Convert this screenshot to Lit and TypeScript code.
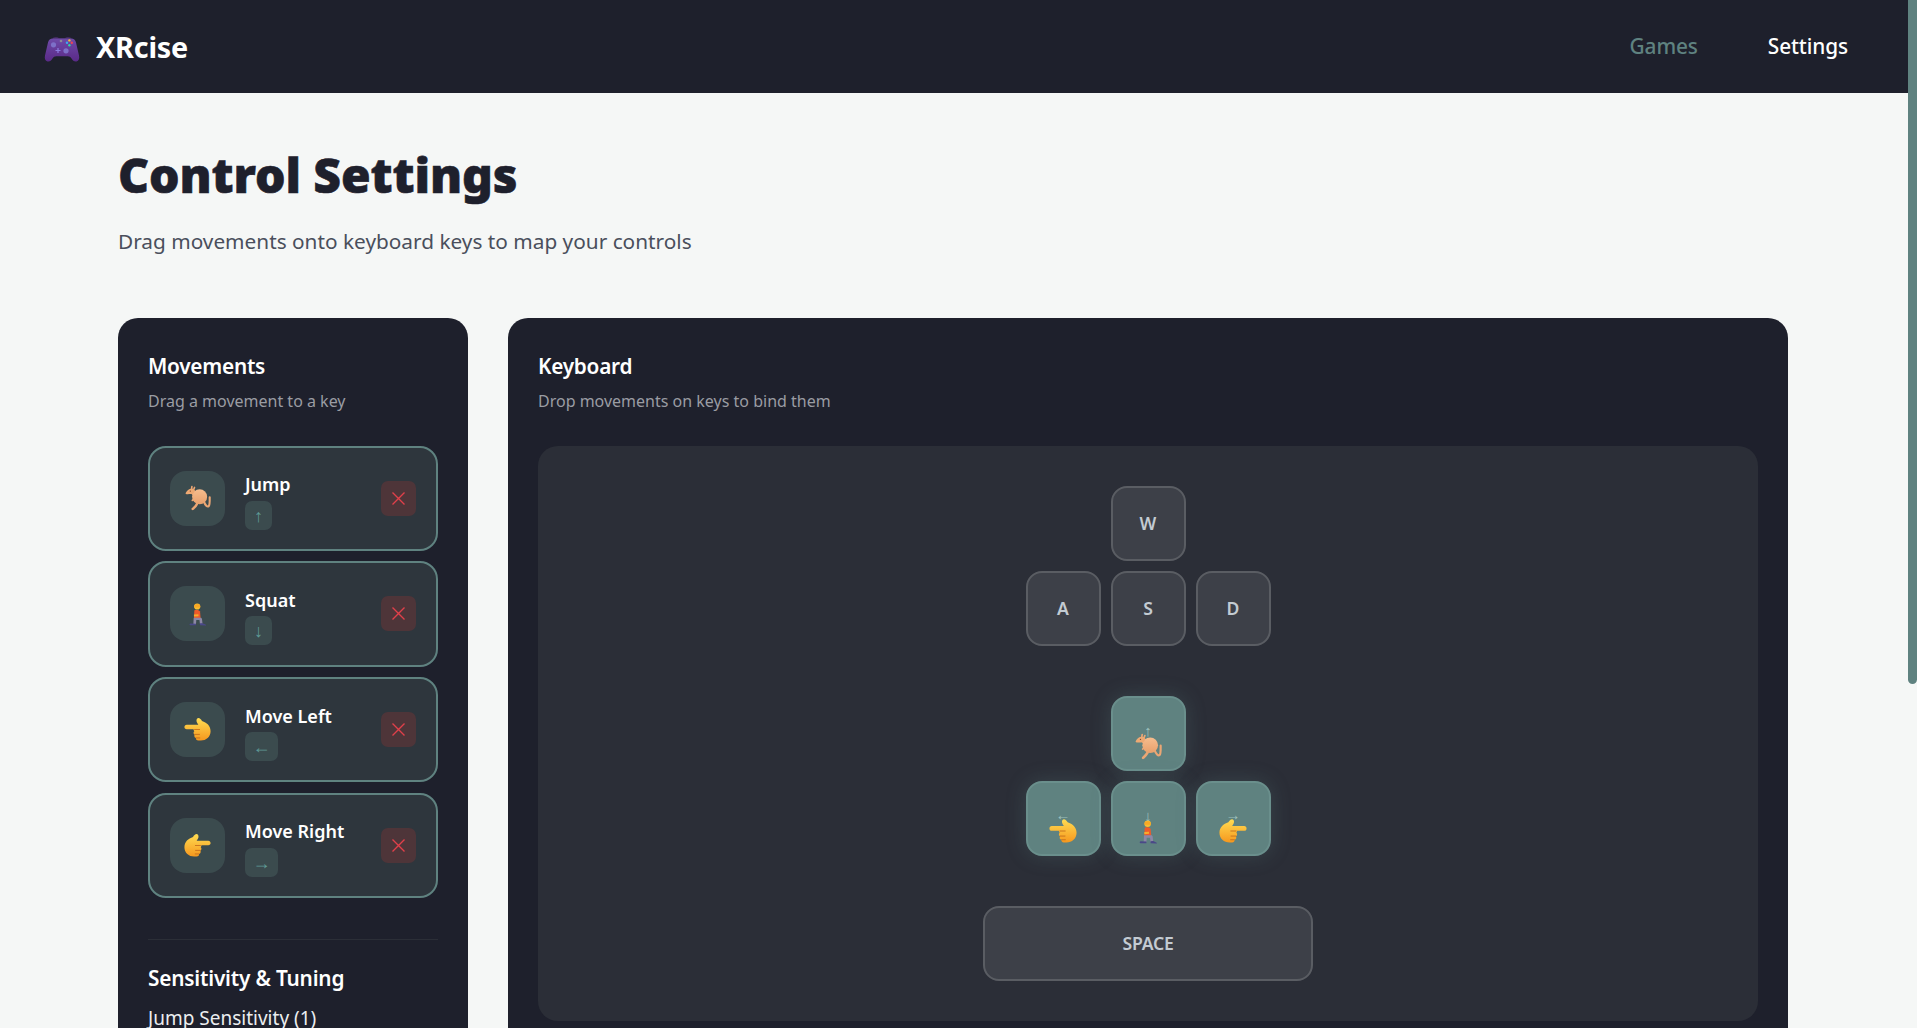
import { LitElement, html, css, svg } from "lit";
import { customElement } from "lit/decorators.js";

const grad = (id: string, a: string, b: string) => svg`<defs><linearGradient id=${id} x1="0" y1="0" x2="0" y2="1"><stop offset="0" stop-color=${a}/><stop offset="1" stop-color=${b}/></linearGradient></defs>`;

const kangaroo = (s: number) => html`<svg class="emo" width=${s} height=${s} viewBox="0 0 32 32">
  ${grad("kg", "#f6bd8e", "#e8a06c")}
  <g stroke="#eba674" fill="none" stroke-linecap="round" stroke-linejoin="round">
    <path stroke-width="2.600" d="M23 20c2 5 4.500 7.500 6.200 6 1.300-1.300 1.300-6 1.200-11"/>
    <path stroke-width="3" d="M15.500 20c.5 4-3 6.500-6 9.500"/>
    <path stroke-width="2" d="M13 15.500l-4 3.500"/>
    <path stroke-width="6" d="M8.500 7.500l5 4.500"/>
    <path stroke-width="2" d="M8 5l.5-3M10.500 6l1.200-3"/>
  </g>
  <circle cx="18" cy="14.500" r="9.300" fill="url(#kg)"/>
  <path fill="#eda973" d="M.8 9.800C2 7 5 4.500 8 4.500c2.500 0 4 2 3.500 4-.4 1.600-2.500 2.700-5 2.700-2 .1-4.200.3-5.300-.2-.5-.2-.6-.7-.4-1.200z"/>
  <circle cx="6.500" cy="7.500" r=".8" fill="#6e3f28"/>
</svg>`;

const hand = (s: number, flip: boolean) => html`<svg class="emo ${flip ? "flip" : ""}" width=${s} height=${s} viewBox="0 0 32 32">
  ${grad(flip ? "hr" : "hl", "#ffdc52", "#f6981e")}
  <path fill="url(#${flip ? "hr" : "hl"})" d="M17 2.500c1.800 0 3.300 1.700 4.300 3.500 5.500 1.700 10.200 5.700 10.200 12 0 6.800-5.300 11-11.500 11h-3c-2 0-3.200-1.500-2.800-3-2-.5-2.500-2.600-1.500-3.800-1.700-.9-1.800-3.100-.5-4.200-.6-.7-.9-1.500-.9-2.300H3.200C1.500 15.700.5 14.500.5 13s1-2.700 2.700-2.700H17c-1-1.600-2.200-3.100-2.200-4.800 0-1.700 1-3 2.200-3z"/>
  <path d="M12.500 16h6M12.800 21.800h5.500M14.500 26h4.200" stroke="#c8701c" stroke-width="1.100" stroke-linecap="round" fill="none"/>
</svg>`;

const kneel = (s: number) => html`<svg class="emo" width=${s} height=${s} viewBox="0 0 32 32">
  <circle cx="15" cy="6.800" r="3.800" fill="#f8bf2f"/>
  <path fill="#f9a825" d="M11.200 6.500c0-3.400 7.600-3.800 7.600 0v1.500h-7.600z"/>
  <path fill="#ef5a2a" d="M11.500 11.500c2.500-1 6.300-.7 7 1.500l.7 8H11z"/>
  <path fill="#f7ad2b" d="M11 16.500l5.500-.3.200 2.600-5.700.4z"/>
  <path fill="#8d87a6" d="M11 20.500h8.200c1 0 1.600.8 1.700 1.500l.7 6-3.200.2-.6-4.700h-3.900l-.4 5-3.200-.2.300-6c0-1 .1-1.800.4-1.800z"/>
  <path fill="#4a4888" d="M6.500 27.600l7 .3v2H6.500c-1.200 0-1.200-2 0-2.300zM18.500 27.500l3.200-.2 4 2c.6.400.3 1.100-.4 1l-6.800-.4z"/>
</svg>`;

const gamepad = html`<svg class="pad" width="36" height="30" viewBox="0 0 36 30">
  <defs><linearGradient id="pg" x1="0" y1="0" x2="0" y2="1"><stop offset="0" stop-color="#6e4aa8"/><stop offset="1" stop-color="#5a2a88"/></linearGradient></defs>
  <path fill="#3f2a5c" d="M9 4c1-1.200 5-1.500 6 .3h6c1-1.800 5-1.500 6-.3l1 2H8z"/>
  <path fill="url(#pg)" d="M9 4.500h18c2.800 0 4.300 1.600 5 4l3 13c.7 3-.3 5.500-2.500 5.900-2.300.4-3.700-1-5-3-1-1.300-2-2.200-3.700-2.200H12.200c-1.700 0-2.700.9-3.700 2.200-1.300 2-2.700 3.400-5 3-2.200-.4-3.200-2.900-2.500-5.900l3-13c.7-2.400 2.200-4 5-4z"/>
  <circle cx="9.500" cy="10.800" r="2.600" fill="#7d70c8"/><circle cx="22" cy="16.800" r="2.600" fill="#7d70c8"/>
  <circle cx="17" cy="7" r="1.300" fill="#8a8a9a"/>
  <path d="M14 14v5M11.500 16.500h5" stroke="#8b7de0" stroke-width="1.200"/>
  <circle cx="25.400" cy="6.400" r="1.200" fill="#f5b83a"/><circle cx="25.400" cy="11.200" r="1.200" fill="#2fd6a0"/>
  <circle cx="23" cy="8.800" r="1.200" fill="#3aa8f0"/><circle cx="27.800" cy="8.800" r="1.200" fill="#ee4454"/>
</svg>`;

const MOVES = [
  { name: "Jump", arrow: "↑", icon: (s: number) => kangaroo(s), narrow: true },
  { name: "Squat", arrow: "↓", icon: (s: number) => kneel(s), narrow: true },
  { name: "Move Left", arrow: "←", icon: (s: number) => hand(s + 1, false), narrow: false },
  { name: "Move Right", arrow: "→", icon: (s: number) => hand(s + 1, true), narrow: false },
];

@customElement("app-root")
export class AppRoot extends LitElement {
  static styles = css`
    :host { display: flex; height: 100vh; overflow: hidden; background: #f5f7f6; color: #fff;
      font-family: "Noto Sans", "Open Sans", sans-serif; }
    * { box-sizing: border-box; }
    .page { flex: 1; min-width: 0; height: 100vh; overflow: hidden; }
    .sb { width: 9px; flex: none; }
    .thumb { height: 684px; background: #5f8280; border-radius: 0 0 5px 5px; }
    header { height: 93px; background: #1e202c; display: flex; align-items: center; justify-content: space-between; padding: 0 60px 0 44px; }
    .logo { display: flex; align-items: center; gap: 16px; font-size: 28.800px; font-weight: 700; letter-spacing: -0.2px; }
    .logo span { padding-bottom: 1px; }
    .pad { display: block; margin-top: 4px; }
    nav { display: flex; gap: 70px; padding-bottom: 2px; font-size: 20.800px; font-weight: 500; letter-spacing: -0.1px; }
    nav .dim { color: #5f8280; }
    main { padding: 50px 120px 48px 118px; }
    h1 { margin: 0; font-size: 48px; line-height: 64px; font-weight: 900; color: #1e202c; letter-spacing: -0.1px; -webkit-text-stroke: 0.6px #1e202c; }
    .lead { margin: 19px 0 0; font-size: 20.800px; line-height: 30px; color: #4a4f5c; }
    .cols { display: grid; grid-template-columns: 350px 1280px; gap: 40px; margin-top: 62px; align-items: stretch; }
    .panel { background: #1e202c; border-radius: 20px; padding: 30px; }
    h2 { margin: 0; font-size: 20.800px; line-height: 37px; font-weight: 600; letter-spacing: -0.25px; }
    .sub { margin: 6px 0 0; font-size: 16px; line-height: 21px; color: #9a9ca3; }
    .cards { display: flex; flex-direction: column; gap: 10.300px; margin-top: 33.500px; }
    .card { height: 105.400px; background: #2e363d; border: 2px solid #5f8280; border-radius: 18px; display: flex; align-items: center; padding: 0 20px; }
    .ico { width: 55px; height: 55px; flex: none; border-radius: 16px; background: #3b4b4e; display: flex; align-items: center; justify-content: center; }
    .emo { display: block; }
    .flip { transform: scaleX(-1); }
    .info { flex: 1; margin-left: 20px; padding-top: 4.500px; display: flex; flex-direction: column; align-items: flex-start; }
    .name { font-size: 18px; line-height: 27px; font-weight: 600; }
    .tag { margin-top: 2.500px; height: 29px; min-width: 27px; border-radius: 7px; background: #3b4b4e; color: #5f9a96; font-size: 18px; line-height: 29px; text-align: center; }
    .tag.wide { min-width: 33px; }
    .rm { width: 35px; height: 35px; flex: none; border-radius: 7px; background: #4e3539; display: flex; align-items: center; justify-content: center; }
    hr { border: 0; border-top: 1px solid #2b2e37; margin: 41px 0 0; }
    h3 { margin: 23px 0 0; font-size: 20.800px; line-height: 30px; font-weight: 600; letter-spacing: -0.2px; }
    .tune { margin-top: 12px; }
    .tune label { display: block; font-size: 19px; line-height: 26px; color: #eceef0; }
    .board { margin-top: 33.500px; background: #2b2e37; border-radius: 20px; padding: 40px; height: 575px; display: flex; flex-direction: column; align-items: center; gap: 50px; }
    .cluster { display: flex; flex-direction: column; align-items: center; gap: 10px; }
    .row { display: flex; gap: 10px; }
    .key { width: 75px; height: 75px; flex: none; border-radius: 16px; background: #3d4048; border: 2px solid #5a5d63; display: flex; flex-direction: column; align-items: center; justify-content: center; font-size: 17.600px; font-weight: 600; color: #c3cbd2; }
    .key.space { width: 330px; letter-spacing: -0.2px; }
    .key.on { background: #5f8280; border-color: #6a8f8c; box-shadow: 0 0 20px rgba(95,130,128,0.28); justify-content: flex-end; padding-bottom: 9px; }
    .ka { font-size: 15px; line-height: 13px; color: #9cc0bd; font-weight: 400; margin-bottom: -4px; }
  `;

  private x() {
    return html`<svg width="15" height="15" viewBox="0 0 15 15"><path d="M1.500 1.500l12 12M13.500 1.500l-12 12" stroke="#e0404a" stroke-width="1.400" fill="none"/></svg>`;
  }

  render() {
    const boundKey = (m: (typeof MOVES)[number]) => html`<div class="key on"><span class="ka">${m.arrow}</span>${m.icon(27)}</div>`;
    return html`
      <div class="page">
        <header>
          <div class="logo">${gamepad}<span>XRcise</span></div>
          <nav><span class="dim">Games</span><span>Settings</span></nav>
        </header>
        <main>
          <h1>Control Settings</h1>
          <p class="lead">Drag movements onto keyboard keys to map your controls</p>
          <div class="cols">
            <section class="panel">
              <h2>Movements</h2>
              <p class="sub">Drag a movement to a key</p>
              <div class="cards">
                ${MOVES.map(m => html`<div class="card">
                  <div class="ico">${m.icon(26)}</div>
                  <div class="info"><span class="name">${m.name}</span><span class="tag ${m.narrow ? "" : "wide"}">${m.arrow}</span></div>
                  <div class="rm">${this.x()}</div>
                </div>`)}
              </div>
              <hr />
              <h3>Sensitivity &amp; Tuning</h3>
              <div class="tune"><label>Jump Sensitivity (1)</label></div>
            </section>
            <section class="panel">
              <h2>Keyboard</h2>
              <p class="sub">Drop movements on keys to bind them</p>
              <div class="board">
                <div class="cluster">
                  <div class="key">W</div>
                  <div class="row"><div class="key">A</div><div class="key">S</div><div class="key">D</div></div>
                </div>
                <div class="cluster">
                  ${boundKey(MOVES[0])}
                  <div class="row">${boundKey(MOVES[2])}${boundKey(MOVES[1])}${boundKey(MOVES[3])}</div>
                </div>
                <div class="key space">SPACE</div>
              </div>
            </section>
          </div>
        </main>
      </div>
      <div class="sb"><div class="thumb"></div></div>
    `;
  }
}
